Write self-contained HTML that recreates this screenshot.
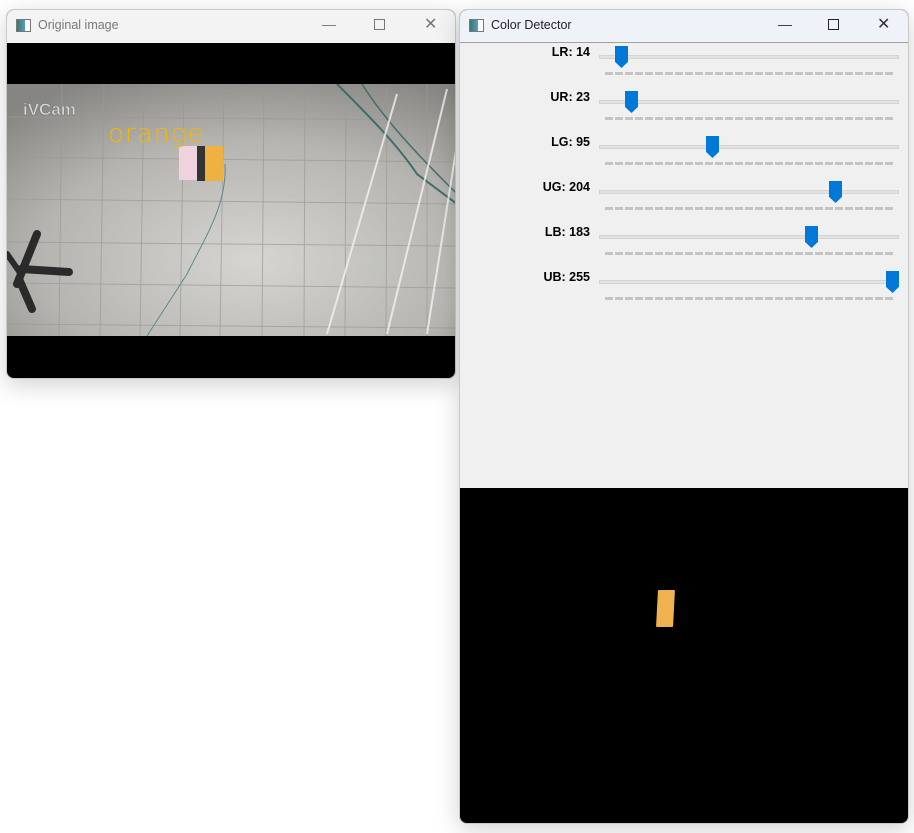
<!DOCTYPE html>
<html><head><meta charset="utf-8"><style>
*{margin:0;padding:0;box-sizing:border-box}
body{width:914px;height:833px;background:#fff;position:relative;overflow:hidden;font-family:"Segoe UI","Liberation Sans",sans-serif}
.win{position:absolute;border-radius:8px;overflow:hidden;box-shadow:0 6px 24px rgba(0,0,0,.18);border:1px solid #c8c8c8}
.tb{position:absolute;left:0;right:0;top:0;height:32px;font-size:12.5px;color:#222}
.tb .t{position:absolute;left:31px;top:8px}
.ico{position:absolute;left:9px;top:9px;width:15px;height:13px;border:1px solid #777;background:linear-gradient(90deg,#3a7a6a,#5a9ac0 60%,#fff 60%)}
.ctl{position:absolute;top:6px;font-size:14px;color:#333}
.lab{position:absolute;right:320px;font:bold 12.5px "Liberation Sans",sans-serif;color:#000;text-align:right}
.track{position:absolute;left:139px;width:300px;height:4px;background:#e3e3e3;border:1px solid #d4d4d4}
.ticks{position:absolute;left:145px;width:289px;height:3px;background:repeating-linear-gradient(90deg,#c4c4c4 0 8px,transparent 8px 10px)}
.thumb{position:absolute;width:13px;height:22px;background:#0078d7;clip-path:polygon(0 0,100% 0,100% 72%,50% 100%,0 72%)}
</style></head><body>

<div class="win" style="left:6px;top:9px;width:450px;height:370px;background:#000">
 <div class="tb" style="background:#f3f3f3;height:33px"><div class="ico"></div><div class="t" style="color:#777">Original image</div>
  <div class="ctl" style="left:315px;color:#777">—</div><div class="ctl" style="left:367px;top:5px;width:11px;height:11px;border:1px solid #777;margin-top:4px"></div><div class="ctl" style="left:417px;color:#777;font-size:16px;top:4px">✕</div></div>
 <svg style="position:absolute;left:0;top:74px" width="450" height="252" viewBox="0 0 450 252">
  <defs><radialGradient id="g" cx="0.55" cy="0.7" r="0.8"><stop offset="0" stop-color="#d6d5d2"/><stop offset="0.6" stop-color="#b5b4b0"/><stop offset="1" stop-color="#868582"/></radialGradient></defs>
  <rect width="450" height="252" fill="url(#g)"/>
  <g stroke="#9a9995" stroke-width="1" opacity=".7">
   <path d="M0 33 L450 36 M0 73 L450 78 M0 115 L450 120 M0 158 L450 162 M0 199 L450 204 M0 240 L450 244"/>
   <path d="M55 0 L52 252 M97 0 L93 252 M137 0 L133 252 M177 0 L173 252 M217 0 L213 252 M257 0 L255 252 M298 0 L297 252 M339 0 L338 252 M380 0 L379 252 M420 0 L420 252"/>
  </g>
  <path d="M330 0 C360 30 390 60 410 90 L450 120" stroke="#3d6e6c" stroke-width="2" fill="none"/>
  <path d="M355 0 C380 40 420 80 450 110" stroke="#40706e" stroke-width="1.5" fill="none"/>
  <path d="M218 80 C220 120 200 150 180 190 L140 252" stroke="#5c8c88" stroke-width="1" fill="none"/>
  <g stroke="#f2f2f2" stroke-width="2" opacity=".8"><path d="M390 10 L320 250 M440 5 L380 250 M450 60 L420 250"/></g>
  <g stroke="#2a2a2a" stroke-linecap="round" fill="none">
   <path d="M30 150 L10 200" stroke-width="8"/><path d="M14 185 L62 188" stroke-width="8"/><path d="M12 195 L25 225" stroke-width="8"/><path d="M0 170 L14 190" stroke-width="6"/>
  </g>
  <rect x="172" y="62" width="18" height="34" fill="#efd2de"/><rect x="190" y="62" width="8" height="35" fill="#333"/><rect x="198" y="62" width="18" height="35" fill="#f0b143"/>
  <text x="16" y="31" font-family="Liberation Sans,sans-serif" font-weight="bold" font-size="17" fill="#d8d8d8" stroke="#777" stroke-width=".6">iVCam</text>
  <text x="101" y="58" font-family="DejaVu Sans,sans-serif" font-weight="200" font-size="26" fill="#f5b800" letter-spacing="1">orange</text>
 </svg>
</div>

<div class="win" style="left:459px;top:9px;width:450px;height:815px;background:#000">
 <div class="tb" style="background:#eff2f9;height:33px;border-bottom:1px solid #a0a0a0"><div class="ico"></div><div class="t">Color Detector</div>
  <div class="ctl" style="left:318px">—</div><div class="ctl" style="left:368px;top:5px;width:11px;height:11px;border:1.3px solid #222;margin-top:4px"></div><div class="ctl" style="left:417px;font-size:16px;top:4px">✕</div></div>
 <div style="position:absolute;left:0;top:33px;width:450px;height:445px;background:#f0f0f0">
  <div class="lab" style="top:2px">LR: 14</div><div class="track" style="top:12px"></div><div class="ticks" style="top:29px"></div><div class="thumb" style="left:155px;top:3px"></div>
  <div class="lab" style="top:47px">UR: 23</div><div class="track" style="top:57px"></div><div class="ticks" style="top:74px"></div><div class="thumb" style="left:165px;top:48px"></div>
  <div class="lab" style="top:92px">LG: 95</div><div class="track" style="top:102px"></div><div class="ticks" style="top:119px"></div><div class="thumb" style="left:246px;top:93px"></div>
  <div class="lab" style="top:137px">UG: 204</div><div class="track" style="top:147px"></div><div class="ticks" style="top:164px"></div><div class="thumb" style="left:369px;top:138px"></div>
  <div class="lab" style="top:182px">LB: 183</div><div class="track" style="top:192px"></div><div class="ticks" style="top:209px"></div><div class="thumb" style="left:345px;top:183px"></div>
  <div class="lab" style="top:227px">UB: 255</div><div class="track" style="top:237px"></div><div class="ticks" style="top:254px"></div><div class="thumb" style="left:426px;top:228px"></div>
 </div>
 <div style="position:absolute;left:197px;top:580px;width:17px;height:37px;background:#f0b24f;transform:skewX(-3deg);border-radius:1px"></div>
</div>
</body></html>
